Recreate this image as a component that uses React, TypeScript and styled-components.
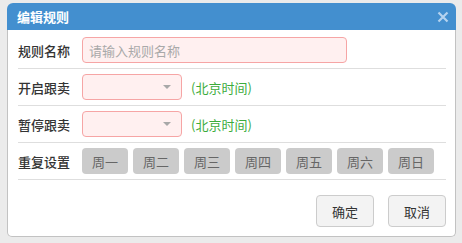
import styled, { createGlobalStyle } from "styled-components";

const GlobalStyle = createGlobalStyle`
    body {
        margin: 0;
        background: #ebebeb;
        font-family: "Noto Sans CJK SC", "Liberation Sans", sans-serif;
    }
`;

const Dialog = styled.div`
    width: 449px;
    margin: 3px 0 0 7px;
    display: flex;
    flex-direction: column;
`;

const Header = styled.div`
    height: 27px;
    display: flex;
    align-items: center;
    justify-content: space-between;
    padding: 0 6px 0 10px;
    background: #438fcf;
    border-radius: 6px 6px 0 0;
`;

const Title = styled.div`
    color: #ffffff;
    font-size: 13px;
    font-weight: bold;
`;

const CloseBtn = styled.div`
    width: 14px;
    height: 14px;
    display: flex;
    align-items: center;
    justify-content: center;
`;

const Body = styled.div`
    background: #ffffff;
    border: 1px solid #c2c2c2;
    border-top: none;
    border-radius: 0 0 5px 5px;
    padding: 0 9px 0 10px;
`;

const Row = styled.div<{ $first?: boolean }>`
    display: flex;
    align-items: center;
    height: 26px;
    padding: ${({ $first }) => ($first ? "7px 0 5px" : "5px 0 5px")};
    border-bottom: 1px solid #dedede;
`;

const Label = styled.div`
    width: 64px;
    flex-shrink: 0;
    font-size: 13px;
    font-weight: 500;
    color: #333333;
`;

const TextInput = styled.input`
    box-sizing: border-box;
    width: 265px;
    height: 26px;
    padding: 0 6px;
    border: 1px solid #f6a5a5;
    border-radius: 4px;
    background: #fff0f0;
    font-family: inherit;
    font-size: 13px;
    color: #333;
    outline: none;

    &::placeholder {
        color: #a9a9a9;
    }
`;

const Select = styled.div`
    box-sizing: border-box;
    width: 100px;
    height: 26px;
    border: 1px solid #f6a5a5;
    border-radius: 4px;
    background: #fff0f0;
    display: flex;
    align-items: center;
    justify-content: flex-end;
    padding-right: 10px;
`;

const Caret = styled.div`
    width: 0;
    height: 0;
    border-left: 4px solid transparent;
    border-right: 4px solid transparent;
    border-top: 4px solid #a8a8a8;
`;

const TimeNote = styled.div`
    margin-left: 9px;
    font-size: 13px;
    color: #3cac3c;
`;

const Days = styled.div`
    display: flex;
    gap: 5px;
`;

const DayBtn = styled.div`
    width: 46px;
    height: 26px;
    border-radius: 4px;
    background: #cbcbcb;
    color: #666666;
    font-size: 13px;
    display: flex;
    align-items: center;
    justify-content: center;
`;

const Footer = styled.div`
    display: flex;
    justify-content: flex-end;
    gap: 14px;
    padding: 15px 0 9px;
`;

const FootBtn = styled.div`
    box-sizing: border-box;
    width: 58px;
    height: 32px;
    border: 1px solid #cccccc;
    border-radius: 4px;
    background: #f3f3f3;
    color: #333333;
    font-size: 13px;
    display: flex;
    align-items: center;
    justify-content: center;
`;

const days = ["周一", "周二", "周三", "周四", "周五", "周六", "周日"];

const App = () => {
    return (
        <>
            <GlobalStyle />
            <Dialog>
                <Header>
                    <Title>编辑规则</Title>
                    <CloseBtn>
                        <svg width="12" height="12" viewBox="0 0 12 12">
                            <path d="M1.5 1.5 L10.5 10.5 M10.5 1.5 L1.5 10.5" stroke="#b5d3ef" strokeWidth="2.2" />
                        </svg>
                    </CloseBtn>
                </Header>
                <Body>
                    <Row $first>
                        <Label>规则名称</Label>
                        <TextInput placeholder="请输入规则名称" />
                    </Row>
                    <Row>
                        <Label>开启跟卖</Label>
                        <Select>
                            <Caret />
                        </Select>
                        <TimeNote>(北京时间)</TimeNote>
                    </Row>
                    <Row>
                        <Label>暂停跟卖</Label>
                        <Select>
                            <Caret />
                        </Select>
                        <TimeNote>(北京时间)</TimeNote>
                    </Row>
                    <Row>
                        <Label>重复设置</Label>
                        <Days>
                            {days.map((d) => (
                                <DayBtn key={d}>{d}</DayBtn>
                            ))}
                        </Days>
                    </Row>
                    <Footer>
                        <FootBtn>确定</FootBtn>
                        <FootBtn>取消</FootBtn>
                    </Footer>
                </Body>
            </Dialog>
        </>
    );
};

export default App;
